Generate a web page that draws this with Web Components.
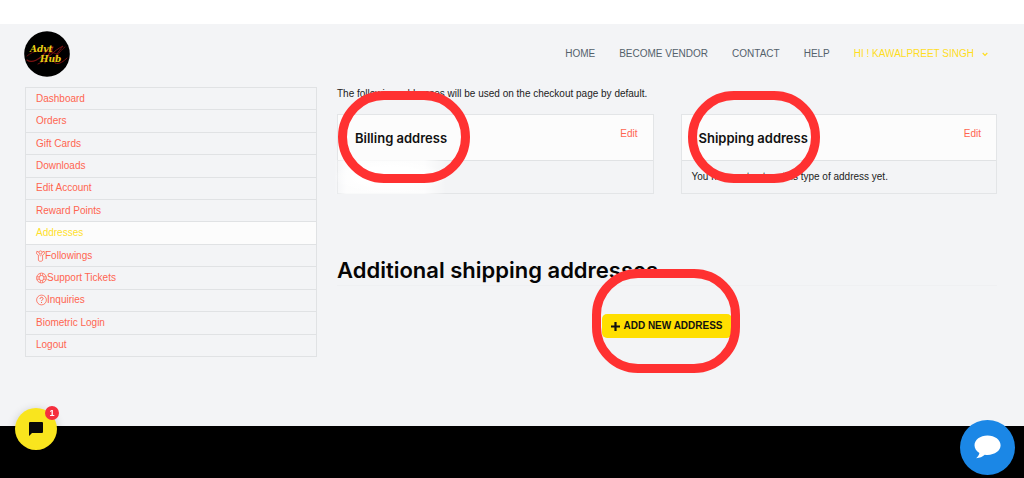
<!DOCTYPE html>
<html lang="en">
<head>
<meta charset="utf-8">
<title>Addresses - Advt Hub</title>
<style>
  body { margin: 0; background: #fff; color: #222; font: 10px/16px "Liberation Sans", Arial, sans-serif; }
</style>
</head>
<body>
<account-page></account-page>
<script>
const define = (name, html, setup) => {
  const template = document.createElement('template');
  template.innerHTML = html;
  customElements.define(name, class extends HTMLElement {
    constructor() {
      super();
      this.attachShadow({ mode: 'open' }).append(template.content.cloneNode(true));
    }
    connectedCallback() { if (setup) setup(this, this.shadowRoot); }
  });
};

define('highlight-ring', `
  <style>
    :host { position: absolute; box-sizing: border-box; width: 132px; height: 92px; border: 9px solid #ff3131; border-radius: 46px; pointer-events: none; z-index: 2; }
  </style>`);

define('site-logo', `
  <style>
    :host { display: block; }
    a { display: block; width: 46px; height: 46px; }
    svg { display: block; }
  </style>
  <a href="#" aria-label="Advt Hub">
    <svg width="46" height="46" viewBox="0 0 46 46">
      <circle cx="23" cy="23" r="22.8" fill="#000"/>
      <g fill="none" stroke="#7a1212" stroke-linecap="round">
        <path stroke-width="1.2" d="M3 29c5 4 13-1 18-7 4-5 7-7 8-6-1 4-7 9-8 16"/>
        <path stroke-width="1" d="M14 33c8-3 16-14 25-18-5 6-10 13-8 17 4 2 9-2 12-5"/>
        <path stroke-width=".8" d="M3 25c7-6 16-7 30-2M30 29c4-6 8-11 11-13"/>
      </g>
      <g fill="#e8cf14" font-family="'DejaVu Serif', serif" font-size="9" font-weight="700" font-style="italic">
        <text x="6" y="21">Advt</text><text x="16" y="31">Hub</text>
      </g>
    </svg>
  </a>`);

define('nav-link', `
  <style>
    :host { display: block; }
    a { display: flex; align-items: center; gap: 8px; color: #54616b; text-decoration: none; text-transform: uppercase; white-space: nowrap; }
    svg { display: none; }
    :host([menu]) a { color: #ffdd1f; }
    :host([menu]) svg { display: block; }
  </style>
  <a href="#"><slot></slot><svg width="6" height="6" viewBox="0 0 6 6" fill="none" stroke="currentColor" stroke-width="1.2"><path d="M.7 2 3 4.3 5.3 2"/></svg></a>`);

define('site-header', `
  <style>
    :host { display: flex; align-items: center; justify-content: space-between; padding: 7px 36px 10px 24px; }
    nav { display: flex; flex-wrap: wrap; gap: 24px; }
  </style>
  <site-logo></site-logo>
  <nav aria-label="Main">
    <nav-link>Home</nav-link><nav-link>Become Vendor</nav-link><nav-link>Contact</nav-link><nav-link>Help</nav-link><nav-link menu>Hi ! Kawalpreet Singh</nav-link>
  </nav>`);

define('account-link', `
  <style>
    :host { display: grid; border-bottom: 1px solid #e0e2e4; }
    a { display: flex; align-items: center; padding: 0 10px; color: #ff6550; text-decoration: none; }
    :host([current]) a { color: #ffe02b; background: #fcfcfc; }
  </style>
  <a href="#"><slot name="icon"></slot><slot></slot></a>`,
  (host, root) => { if (host.hasAttribute('current')) root.querySelector('a').setAttribute('aria-current', 'page'); });

define('account-nav', `
  <style>
    :host { display: block; }
    nav { display: grid; grid-auto-rows: 1fr; min-height: 269px; border: 1px solid #e0e2e4; border-bottom: 0; }
    svg { display: block; fill: none; stroke: #ff6550; stroke-width: .8; }
  </style>
  <nav aria-label="Account">
    <account-link>Dashboard</account-link>
    <account-link>Orders</account-link>
    <account-link>Gift Cards</account-link>
    <account-link>Downloads</account-link>
    <account-link>Edit Account</account-link>
    <account-link>Reward Points</account-link>
    <account-link current>Addresses</account-link>
    <account-link><svg slot="icon" width="9" height="12" viewBox="0 0 9 12"><circle cx="4.5" cy="2.4" r="1.5"/><path d="M3 2.3.9 1.200.5 3.6l1.900 1.500v5c0 .8 1.100 1.200 2.100 1.200s2.100-.4 2.100-1.200v-5l1.900-1.500-.4-2.400L6 2.300M3.200 4.600l1.300 1.200 1.300-1.200"/></svg>Followings</account-link>
    <account-link><svg slot="icon" width="11" height="12" viewBox="0 0 11 12"><circle cx="5.5" cy="6" r="4.900"/><circle cx="5.5" cy="6" r="2.500"/><path d="M4.300 1.300v2.500M6.700 1.300v2.500M4.300 8.200v2.500M6.700 8.200v2.500M.8 4.800h2.500M.8 7.200h2.500M7.700 4.800h2.500M7.700 7.200h2.500"/></svg>Support Tickets</account-link>
    <account-link><svg slot="icon" width="11" height="12" viewBox="0 0 11 12"><circle cx="5.5" cy="6" r="4.900"/><path stroke-width="1" d="M4 4.900c0-2.100 3.100-2.100 3.100-.2C7.100 5.800 5.500 5.900 5.500 7.100M5.500 8v1"/></svg>Inquiries</account-link>
    <account-link>Biometric Login</account-link>
    <account-link>Logout</account-link>
  </nav>`);

define('address-card', `
  <style>
    :host { display: block; border: 1px solid #e3e5e7; }
    header { display: flex; align-items: flex-start; justify-content: space-between; padding: 11px 15px 10px 17px; background: #fcfcfc; border-bottom: 1px solid #e0e2e4; }
    h3 { position: relative; margin: 0; color: #111; font: 600 13px/24px Inter, sans-serif; }
    a { color: #ff6550; text-decoration: none; }
    .body { position: relative; min-height: 16px; padding: 8px 10px; }
    highlight-ring { left: var(--ring-left, -17px); top: -35px; }
    .hidden { display: none; }
    :host([redacted]) .hidden { display: block; position: absolute; left: -4px; top: -1px; width: 112px; height: 34px; background: radial-gradient(closest-side, #fff 60%, #fff0), linear-gradient(90deg, #fff0, #fffc 12px, #fffc 90px, #fff0); }
  </style>
  <header><h3><slot name="title"></slot><highlight-ring></highlight-ring></h3><a href="#">Edit</a></header>
  <div class="body"><slot></slot><div class="hidden"></div></div>`);

define('add-address', `
  <style>
    :host { display: block; position: relative; }
    button { display: flex; align-items: center; gap: 3px; height: 24px; padding: 0 9px; border: 0; border-radius: 5px; background: #ffdf00; color: #111; font: 700 10px/16px "Liberation Sans", Arial, sans-serif; text-transform: uppercase; white-space: nowrap; }
    highlight-ring { width: 148px; height: 104px; left: -10px; top: -45px; }
  </style>
  <button type="button"><svg width="9" height="9" viewBox="0 0 9 9" stroke="#111" stroke-width="2.2"><path d="M4.500 0v9M0 4.500h9"/></svg><span>Add new address</span></button>
  <highlight-ring></highlight-ring>`);

define('address-book', `
  <style>
    :host { display: block; }
    p { margin: 0 0 13px; line-height: 14px; }
    .cards { display: grid; grid-template-columns: 1fr 1fr; gap: 27px; }
    .second { --ring-left: -11px; }
    h2 { margin: 62px 0 28px; border-bottom: 1px solid #eff0f2; color: #050505; font: 600 22px/29px Inter, sans-serif; }
    .action { display: flex; justify-content: center; }
  </style>
  <p>The following addresses will be used on the checkout page by default.</p>
  <div class="cards">
    <address-card redacted><span slot="title">Billing address</span></address-card>
    <address-card class="second"><span slot="title">Shipping address</span>You have not set up this type of address yet.</address-card>
  </div>
  <h2>Additional shipping addresses</h2>
  <div class="action"><add-address></add-address></div>`);

define('chat-launchers', `
  <style>
    :host { display: block; }
    button { position: fixed; display: grid; place-items: center; padding: 0; border: 0; border-radius: 50%; }
    .left { left: 15px; bottom: 28px; width: 42px; height: 42px; background: #f9e51e; box-shadow: 0 2px 10px #0003; }
    .right { right: 9px; bottom: 3px; width: 55px; height: 55px; background: #1b87e6; }
    .badge { position: absolute; right: -2px; top: -2px; width: 14px; height: 14px; border-radius: 50%; background: #f52f3e; color: #fff; font: 700 9px/14px "Liberation Sans", sans-serif; text-align: center; }
  </style>
  <button type="button" class="left" aria-label="Messages">
    <svg width="16" height="16" viewBox="0 0 16 16"><path fill="#090909" d="M2 1h12q1 0 1 1v9q0 1-1 1H4l-3 3V2q0-1 1-1z"/></svg>
    <span class="badge">1</span>
  </button>
  <button type="button" class="right" aria-label="Live chat">
    <svg width="28" height="26" viewBox="0 0 28 26"><path fill="#fff" d="M13.500.500C6.200.500.500 4.800.500 10.300c0 3.200 2 5.900 4.900 7.700-.4 2-1.500 3.600-3.200 5.200 3.500-.3 6.500-1.500 8.600-3.500.9.200 1.800.2 2.700.2 7.300 0 13.100-4.200 13.100-9.600S20.800.500 13.500.500z"/></svg>
  </button>`);

define('account-page', `
  <style>
    :host { display: flex; flex-direction: column; box-sizing: border-box; min-height: 100vh; padding-top: 24px; }
    .shell { background: #f3f4f6; padding-bottom: 69px; }
    main { display: grid; grid-template-columns: 292fr 660fr; gap: 20px; padding: 0 27px 0 25px; }
    footer { flex: 1; min-height: 52px; background: #000; }
  </style>
  <div class="shell">
    <site-header></site-header>
    <main><account-nav></account-nav><address-book></address-book></main>
  </div>
  <footer></footer>
  <chat-launchers></chat-launchers>`);
</script>
</body>
</html>
